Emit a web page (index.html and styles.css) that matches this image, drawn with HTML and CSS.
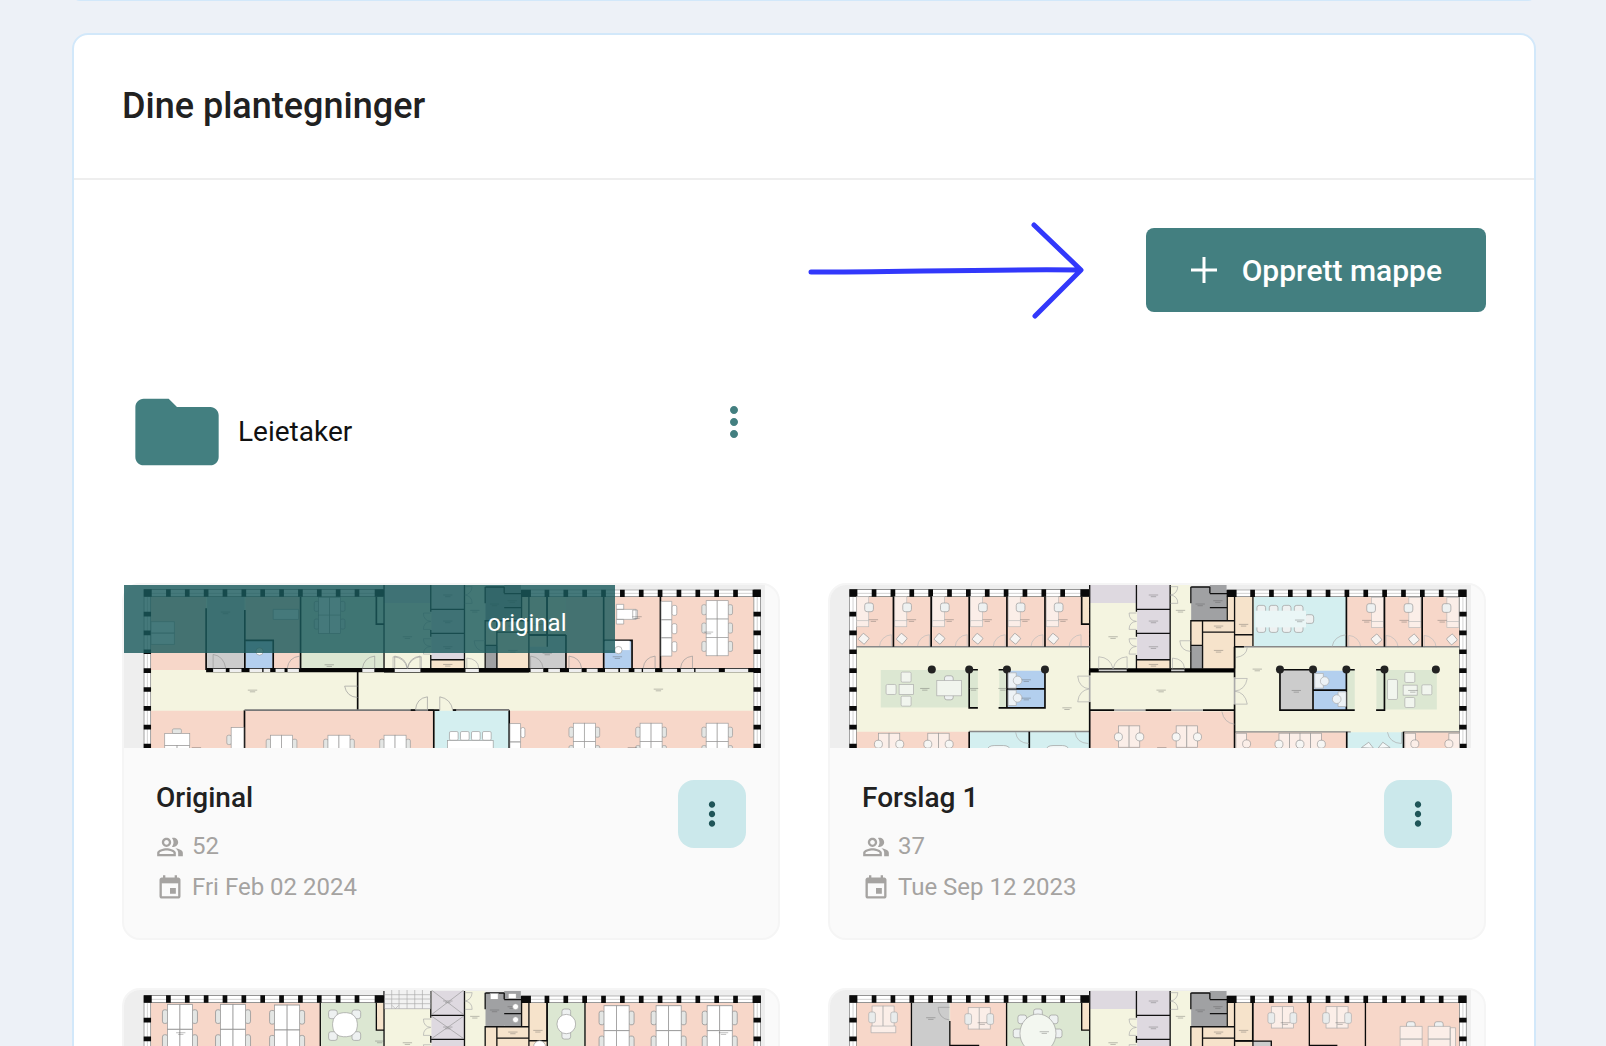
FILE: index.html
```html
<!DOCTYPE html>
<html lang="no">
<head>
<meta charset="utf-8">
<meta name="viewport" content="width=device-width, initial-scale=1">
<title>Dine plantegninger</title>
<link rel="stylesheet" href="styles.css">
</head>
<body>
<svg class="sprite" aria-hidden="true">
  <defs>
    <symbol id="more" viewBox="0 0 24 24"><path d="M12 8c1.1 0 2-.9 2-2s-.9-2-2-2-2 .9-2 2 .9 2 2 2zm0 2c-1.1 0-2 .9-2 2s.9 2 2 2 2-.9 2-2-.9-2-2-2zm0 6c-1.1 0-2 .9-2 2s.9 2 2 2 2-.9 2-2-.9-2-2-2z"/></symbol>
    <symbol id="people" viewBox="0 0 24 24"><path d="M16.5 13c-1.200 0-3.070.34-4.500 1-1.430-.67-3.300-1-4.500-1C5.330 13 1 14.080 1 16.250V19h22v-2.750c0-2.170-4.330-3.250-6.500-3.250z" fill="none"/><path d="M16.670 13.130C18.040 14.060 19 15.320 19 17v3h4v-3c0-2.180-3.570-3.470-6.330-3.870zM15 12c2.210 0 4-1.790 4-4s-1.790-4-4-4c-.47 0-.91.1-1.330.24C14.500 5.270 15 6.580 15 8s-.5 2.730-1.330 3.760c.42.140.86.240 1.330.24zM9 12c2.210 0 4-1.790 4-4s-1.790-4-4-4-4 1.790-4 4 1.790 4 4 4zm0-6c1.100 0 2 .9 2 2s-.9 2-2 2-2-.9-2-2 .9-2 2-2zM9 13c-2.670 0-8 1.340-8 4v3h16v-3c0-2.660-5.330-4-8-4zm6 5H3v-.99C3.200 16.290 6.300 15 9 15s5.800 1.290 6 2v1z"/></symbol>
    <symbol id="event" viewBox="0 0 24 24"><path opacity=".3" d="M5 5h14v3H5z"/><path d="M17 12h-5v5h5v-5zM16 1v2H8V1H6v2H5c-1.110 0-1.990.9-1.990 2L3 19c0 1.100.89 2 2 2h14c1.100 0 2-.9 2-2V5c0-1.100-.9-2-2-2h-1V1h-2zm3 18H5V8h14v11z"/></symbol>

    <!-- two-line room caption -->
    <g id="cap"><path d="M-14 0H14M-8 5H8" stroke="#555" stroke-width="2" opacity=".55"/></g>
    <!-- two desks back to back with a chair on each side -->
    <g id="desks" fill="#fff" stroke="#999" stroke-width="2">
      <rect x="-13" y="12" width="14" height="30" rx="5" fill="#e4e6e4"/><rect x="65" y="12" width="14" height="30" rx="5" fill="#e4e6e4"/>
      <rect width="33" height="55"/><rect x="33" width="33" height="55"/>
    </g>
    <g id="softdesks" stroke="#aaa" stroke-width="2">
      <rect width="33" height="64" fill="#fbeee8"/><rect x="33" width="33" height="64" fill="#fbeee8"/>
      <rect x="-10" y="18" width="20" height="32" rx="6" fill="#e9ecec"/><rect x="56" y="18" width="20" height="32" rx="6" fill="#e9ecec"/>
    </g>
    <g id="roundseats" stroke="#999" stroke-width="2">
      <rect width="32" height="64" fill="#fbeee8"/><rect x="32" width="32" height="64" fill="#fbeee8"/>
      <circle cx="0" cy="33" r="12" fill="#f6f6f4"/><circle cx="64" cy="33" r="12" fill="#f6f6f4"/>
    </g>
    <g id="door" fill="none" stroke="#aaa" stroke-width="2"><path d="M0 0V-38A38 38 0 0 1 38 0"/></g>
    <g id="seat"><rect x="-15" y="-15" width="30" height="30" rx="4" fill="#f1f5ee" stroke="#aaa" stroke-width="2"/></g>
    <g id="chair"><rect x="-13" y="-13" width="26" height="26" rx="7" fill="#eef1f1" stroke="#999" stroke-width="2"/></g>
    <!-- single office: desk, chair, armchair, door -->
    <g id="office">
      <rect width="36" height="75" fill="#fbeee8" stroke="#bbb" stroke-width="2"/><rect y="72" width="36" height="18" fill="#fbeee8" stroke="#bbb" stroke-width="2"/>
      <use href="#chair" x="37" y="32"/>
      <rect x="9" y="114" width="24" height="24" rx="3" fill="#f6f4f2" stroke="#999" stroke-width="2" transform="rotate(40 21 126)"/>
      <path d="M68 150A38 38 0 0 1 104 114V150" fill="none" stroke="#bbb" stroke-width="2"/>
      <use href="#cap" x="50" y="69"/>
    </g>
    <!-- outer wall with windows -->
    <g id="shell">
      <path d="M100 69H808M1220 70H1936M99 58V560M1926 58V560" stroke="#777" stroke-width="22"/>
      <path d="M110 69H800M1228 70H1916M99 80V560M1926 80V560" stroke="#fff" stroke-width="18"/>
      <path d="M110 70H800M1228 70H1916M99 80V560M1926 80V560" stroke="#bbb" stroke-width="2"/>
      <path d="M155 69H770M1289 70H1900" stroke="#0a0a0a" stroke-width="22" stroke-dasharray="14 42.500"/>
      <path d="M99 125V560M1926 125V560" stroke="#0a0a0a" stroke-width="22" stroke-dasharray="14 42.500"/>
      <path d="M88 58h24v22h-24zM780 58h28v22h-28zM1218 59h30v22h-30zM1912 59h25v22h-25z" fill="#0a0a0a"/>
    </g>
    <!-- stair and lift core -->
    <g id="core">
      <path d="M808 45h302v250H808z" fill="#f4f4e0"/>
      <path d="M808 45h140v54H808zM950 45h98v223h-98z" fill="#ded9e0"/>
      <path d="M950 270h98v26h-98zM1112 152h36v74h-36zM1148 152h94v144h-94zM1220 80h78v150h-78z" fill="#f6e3cb"/>
      <path d="M1112 50h56v100h-56zM1168 45h50v105h-50zM1112 228h36v68h-36z" fill="#a0a1a3"/>
      <path d="M808 45V300M948 45V125M948 180V200M948 255V298M1049 45V295M1111 50V100M1111 150V300M1220 80V150M1242 80V295M1297 80V230M1146 152V295M1168 50V70M1112 51H1168M1168 71H1220M1168 113H1220M948 118H1050M948 190H1050M948 269H1050M1111 152H1244M1146 186H1244M1112 226H1146M1242 194H1298" fill="none" stroke="#111" stroke-width="4"/>
      <path d="M808 301H1242" stroke="#000" stroke-width="13"/>
      <path d="M835 301h84M1052 301h40" stroke="#ccc" stroke-width="5"/>
      <path d="M948 129H926M948 178H926M926 129Q926 152 948 154Q926 156 926 178M948 206H926M948 252H926M926 206Q926 228 948 229Q926 231 926 252M835 296V260Q870 262 878 296Q886 262 920 260V296M1050 50H1072M1050 100H1072M1072 50Q1070 72 1050 75Q1072 78 1072 100M1110 212H1078Q1080 242 1110 244M1056 295V264Q1090 266 1092 295" fill="none" stroke="#aaa" stroke-width="2"/>
      <use href="#cap" x="878" y="200"/><use href="#cap" x="999" y="75"/><use href="#cap" x="999" y="153"/><use href="#cap" x="999" y="230"/><use href="#cap" x="1080" y="121"/><use href="#cap" x="1194" y="241"/><use href="#cap" x="1194" y="168"/><use href="#cap" x="1269" y="163"/><use href="#cap" x="1139" y="102"/><use href="#cap" x="1192" y="92"/><use href="#cap" x="999" y="283"/>
    </g>
  </defs>
</svg>

<main class="page">
  <section class="panel panel-previous" aria-hidden="true"></section>
  <section class="panel">
    <header class="panel-head"><h1>Dine plantegninger</h1></header>
    <div class="panel-body">
      <div class="toolbar">
        <svg class="arrow" width="276" height="98" viewBox="0 0 276 98" aria-hidden="true"><path d="M3 51C90 51 180 48 272 49M226 4L273 49L227 95" fill="none" stroke="#3238fb" stroke-width="5" stroke-linecap="round" stroke-linejoin="round"/></svg>
        <button class="create" type="button"><svg width="28" height="28" viewBox="0 0 28 28" aria-hidden="true"><path d="M14 1V27M1 14H27" stroke="#fff" stroke-width="3"/></svg>Opprett mappe</button>
      </div>

      <div class="grid folders">
        <div class="folder">
          <svg class="folder-icon" viewBox="0 0 24 24" aria-hidden="true"><path d="M10 4H4c-1.100 0-1.990.9-1.990 2L2 18c0 1.100.9 2 2 2h16c1.100 0 2-.9 2-2V8c0-1.100-.9-2-2-2h-8l-2-2z"/></svg>
          <a class="folder-name" href="#leietaker">Leietaker</a>
          <button class="folder-menu" type="button" aria-label="Mappevalg"><svg width="48" height="48"><use href="#more"/></svg></button>
        </div>
      </div>

      <div class="grid">
        <article class="card">
          <div class="thumb">
            <svg class="plan" viewBox="39 45 1920 489" preserveAspectRatio="xMinYMin slice" aria-hidden="true">
              <path d="M39 45h1920v489H39z" fill="#eee"/>
              <path d="M119 78h1806v460H119z" fill="#f4f4e0"/>
              <path d="M119 80h166v220H119zM403 80h165v215H403zM1362 80h563v215h-563zM119 422h848v116H119zM1195 422h730v116h-730z" fill="#f7d7c9"/>
              <path d="M288 80h112v215H288zM1254 195h108v100h-108z" fill="#ccc"/>
              <path d="M570 80h248v215H570z" fill="#dce7d2"/>
              <path d="M403 212h81v83h-81zM1478 212h82v83h-82z" fill="#b3cfee"/>
              <path d="M970 422h223v116H970z" fill="#d4eff0"/>
              <path d="M1306 80h56v115h-56z" fill="#f6e3cb"/>
              <use href="#core" x="10"/>
              <use href="#shell" x="10"/>
              <path d="M285 300H1945" stroke="#050505" stroke-width="13"/>
              <path d="M306 301h38M355 301h36M415 301h38M457 301h20M493 301h27M529 301h34M753 301h36M850 301h77M1062 301h40M1257 301h38M1310 301h35M1372 301h38M1425 301h33M1480 301h40M1525 301h26M1568 301h22M1594 301h36M1652 301h44M1707 301h40M1751 301h70M1839 301h70" stroke="#eee" stroke-width="10"/>
              <path d="M285 115V300M401 120V300M568 80V300M739 305V420M400 420V540M967 420V540M1193 420V540M401 211H486V295M795 80V162H818M1363 195V295M1254 195H1363M1476 80V295M1476 211H1561V295M1646 80V295M1306 80V195" fill="none" stroke="#0a0a0a" stroke-width="5"/>
              <path d="M400 420H967M1025 419H1193" stroke="#777" stroke-width="5"/><path d="M898 420h14M950 420h34M1024 420h10" stroke="#111" stroke-width="5"/>
              <path d="M739 348H700Q706 380 739 382M912 420Q915 384 948 380V420M985 420V380Q1018 386 1024 420M790 295V258Q758 262 753 295M850 295V258Q884 262 888 295Q894 262 926 258V295M565 295V258Q532 262 528 295M306 295V253Q338 258 344 295M1372 295V258Q1406 262 1410 295M1630 295V258Q1598 262 1594 295M1742 295V258Q1710 262 1706 295M1257 295V258Q1290 262 1295 295" fill="none" stroke="#999" stroke-width="2"/>
              <g fill="#fff" stroke="#999" stroke-width="2">
                <rect x="184" y="476" width="27" height="14" rx="4" fill="#e4e6e4"/><rect x="161" y="490" width="75" height="36"/><rect x="161" y="526" width="37" height="20"/><rect x="198" y="526" width="37" height="20"/>
                <rect x="347" y="495" width="14" height="28" rx="5" fill="#e4e6e4"/><rect x="360" y="472" width="38" height="70"/>
                <path d="M120 155h70v34h-70zM120 189h70v34h-70zM486 118h76v30h-76z"/>
                <path d="M1648 94h32v55h-32zM1648 149h32v54h-32zM1648 203h32v55h-32zM1195 460h32v55h-32zM1195 515h32v30h-32z"/>
                <path d="M1515 118h58v30h-58zM1514 103h22v15h-22zM1514 148h22v14h-22zM1563 120h14v26h-14z"/>
                <rect x="1480" y="212" width="74" height="28" stroke="none"/><circle cx="1520" cy="240" r="11"/><circle cx="445" cy="244" r="11"/>
                <rect x="1014" y="484" width="26" height="26" rx="4"/><rect x="1047" y="484" width="26" height="26" rx="4"/><rect x="1080" y="484" width="26" height="26" rx="4"/><rect x="1113" y="484" width="26" height="26" rx="4"/><rect x="1008" y="511" width="137" height="40"/>
                <rect x="1681" y="106" width="14" height="30" rx="5"/><rect x="1681" y="161" width="14" height="30" rx="5"/><rect x="1681" y="215" width="14" height="30" rx="5"/><rect x="1228" y="472" width="12" height="30" rx="5"/>
              </g>
              <use href="#desks" x="478" y="495"/><use href="#desks" x="650" y="495"/><use href="#desks" x="818" y="495"/>
              <use href="#desks" x="1385" y="459"/><use href="#desks" x="1385" y="514"/><use href="#desks" x="1585" y="459"/><use href="#desks" x="1585" y="514"/><use href="#desks" x="1783" y="459"/><use href="#desks" x="1783" y="514"/>
              <use href="#desks" x="1783" y="92"/><use href="#desks" x="1783" y="147"/><use href="#desks" x="1783" y="202"/><use href="#desks" x="622" y="82"/><use href="#desks" x="622" y="135"/>
              <use href="#cap" x="424" y="360"/><use href="#cap" x="1640" y="357"/><use href="#cap" x="1790" y="186"/><use href="#cap" x="654" y="284"/><use href="#cap" x="1576" y="140"/><use href="#cap" x="256" y="532"/><use href="#cap" x="1562" y="532"/><use href="#cap" x="1307" y="249"/><use href="#cap" x="1517" y="260"/><use href="#cap" x="343" y="126"/>
            </svg>
            <span class="ribbon">original</span>
          </div>
          <div class="card-body">
            <div class="card-info">
              <h2>Original</h2>
              <p class="meta"><svg width="28" height="28" aria-hidden="true"><use href="#people"/></svg>52</p>
              <p class="meta"><svg width="28" height="28" aria-hidden="true"><use href="#event"/></svg>Fri Feb 02 2024</p>
            </div>
            <button class="card-menu" type="button" aria-label="Valg for Original"><svg width="38" height="38"><use href="#more"/></svg></button>
          </div>
        </article>

        <article class="card">
          <div class="thumb">
            <svg class="plan" viewBox="30 45 1920 489" preserveAspectRatio="xMinYMin slice" aria-hidden="true">
              <path d="M30 45h1920v489H30z" fill="#eee"/>
              <path d="M109 78h1806v460H109z" fill="#f4f4e0"/>
              <path d="M109 80h699v150H109zM1579 80h336v150h-336zM109 485h338v55H109zM808 424h434v116H808zM1244 486h333v54h-333zM1750 486h165v54h-165z" fill="#f7d7c9"/>
              <path d="M182 300h265v112H182zM449 300h24v112h-24zM537 300h23v112h-23zM1580 300h22v118h-22zM1667 300h23v118h-23zM1692 300h156v118h-156z" fill="#dce7d2"/>
              <path d="M562 302h112v110H562zM1480 302h97v118h-97z" fill="#b3cfee"/>
              <path d="M449 485h177v55H449zM629 485h177v55H629zM1300 80h277v150h-277zM1579 486h169v54h-169z" fill="#d4eff0"/>
              <path d="M1378 300h99v120h-99z" fill="#ccc"/>
              <path d="M784 80h22v82h-22z" fill="#f6e3cb"/>
              <use href="#core"/>
              <use href="#shell"/>
              <use href="#office" x="110" y="80"/><use href="#office" x="224" y="80"/><use href="#office" x="337" y="80"/><use href="#office" x="451" y="80"/><use href="#office" x="564" y="80"/><use href="#office" x="678" y="80"/>
              <use href="#office" transform="matrix(-1 0 0 1 1688 82)"/><use href="#office" transform="matrix(-1 0 0 1 1800 82)"/><use href="#office" transform="matrix(-1 0 0 1 1914 82)"/>
              <path d="M109 230H808M1244 230H1915M808 484H447M1244 485H1590M1748 485H1915" stroke="#888" stroke-width="4"/>
              <path d="M220 80V230M333 80V230M447 80V230M560 80V230M674 80V230M784 80V162H806M1577 80V230M1691 80V230M1804 80V230M808 300V316M808 395V540M1242 230V322M1242 402V540M447 485V540M627 485V540M1578 485V540M1748 485V540M808 420H882M975 420H1053M1147 420H1242M1242 230H1270" fill="none" stroke="#0a0a0a" stroke-width="5"/>
              <path d="M882 420h92M1053 420h94M808 318v76M1242 322v80" stroke="#aaa" stroke-width="5"/>
              <path d="M473 299H447V413H473M535 299H560V413M535 413H560M674 298V413H560M560 356H674M1378 298V420H1602M1378 299H1477V420M1477 360H1577M1577 299V420M1577 299H1602M1666 299H1691V420H1666" fill="none" stroke="#0a0a0a" stroke-width="5"/>
              <g fill="#222"><circle cx="335" cy="298" r="12"/><circle cx="447" cy="298" r="12"/><circle cx="560" cy="298" r="12"/><circle cx="674" cy="298" r="12"/><circle cx="1378" cy="298" r="12"/><circle cx="1477" cy="298" r="12"/><circle cx="1577" cy="298" r="12"/><circle cx="1691" cy="298" r="12"/><circle cx="1845" cy="298" r="12"/></g>
              <use href="#seat" x="258" y="321"/><use href="#seat" x="213" y="358"/><use href="#seat" x="258" y="393"/><use href="#seat" x="1767" y="322"/><use href="#seat" x="1818" y="359"/><use href="#seat" x="1767" y="397"/>
              <g fill="#f1f5ee" stroke="#aaa" stroke-width="2"><rect x="237" y="343" width="43" height="30"/><use href="#chair" x="386" y="330"/><use href="#chair" x="386" y="376"/><rect x="350" y="331" width="74" height="46"/><rect x="1747" y="345" width="42" height="30"/><rect x="1700" y="328" width="30" height="60" rx="4"/></g>
              <g fill="#edf2f6" stroke="#aaa" stroke-width="2"><path d="M564 308h24v46h-24zM564 360h24v46h-24zM1482 310h26v44h-26zM1552 365h24v44h-24z"/><circle cx="592" cy="331" r="13"/><circle cx="592" cy="383" r="13"/><circle cx="1512" cy="333" r="13"/><circle cx="1548" cy="387" r="13"/></g>
              <g><use href="#chair" x="1322" y="119"/><use href="#chair" x="1359" y="119"/><use href="#chair" x="1398" y="119"/><use href="#chair" x="1434" y="119"/><use href="#chair" x="1322" y="174"/><use href="#chair" x="1359" y="174"/><use href="#chair" x="1398" y="174"/><use href="#chair" x="1434" y="174"/><use href="#chair" x="1466" y="147"/><rect x="1304" y="122" width="152" height="50" fill="#eaf6f6"/></g>
              <path d="M808 318H772Q776 354 808 356Q776 360 772 395H808M1242 325H1280Q1274 360 1242 363Q1274 366 1280 402H1242M1534 230Q1540 198 1576 194M586 486Q590 518 626 520M764 486Q768 518 804 520M1700 486Q1706 518 1742 520V486M1204 424Q1210 458 1242 462M1246 262Q1278 258 1280 232" fill="none" stroke="#aaa" stroke-width="2"/>
              <use href="#roundseats" x="894" y="467"/><use href="#roundseats" x="1067" y="467"/><use href="#roundseats" x="175" y="489"/><use href="#roundseats" x="323" y="489"/><use href="#roundseats" x="1375" y="489"/><use href="#roundseats" x="1438" y="489"/>
              <g stroke="#999" stroke-width="2" fill="#fbeee8"><rect x="1246" y="489" width="32" height="60"/><circle cx="1278" cy="521" r="12"/><rect x="1752" y="489" width="32" height="60"/><circle cx="1782" cy="521" r="12"/><rect x="1884" y="489" width="32" height="60"/><circle cx="1884" cy="521" r="12"/></g>
              <g fill="#f4f8f8" stroke="#999" stroke-width="2"><path d="M500 540Q504 526 522 526H550Q566 526 572 540ZM676 540Q680 526 698 526H726Q742 526 748 540ZM1622 532l22-16 14 18zM1708 532l-22-16-14 18z"/></g>
              <use href="#cap" x="314" y="355"/><use href="#cap" x="740" y="413"/><use href="#cap" x="1022" y="360"/><use href="#cap" x="1310" y="297"/><use href="#cap" x="1437" y="150"/><use href="#cap" x="1427" y="361"/><use href="#cap" x="618" y="329"/><use href="#cap" x="618" y="384"/><use href="#cap" x="1776" y="361"/><use href="#cap" x="1024" y="532"/><use href="#cap" x="460" y="355"/><use href="#cap" x="548" y="355"/>
            </svg>
          </div>
          <div class="card-body">
            <div class="card-info">
              <h2>Forslag 1</h2>
              <p class="meta"><svg width="28" height="28" aria-hidden="true"><use href="#people"/></svg>37</p>
              <p class="meta"><svg width="28" height="28" aria-hidden="true"><use href="#event"/></svg>Tue Sep 12 2023</p>
            </div>
            <button class="card-menu" type="button" aria-label="Valg for Forslag 1"><svg width="38" height="38"><use href="#more"/></svg></button>
          </div>
        </article>

        <article class="card">
          <div class="thumb">
            <svg class="plan" viewBox="39 42 1920 489" preserveAspectRatio="xMinYMin slice" aria-hidden="true">
              <path d="M39 40h1920v500H39z" fill="#eee"/>
              <path d="M119 80h1806v460H119z" fill="#f4f4e0"/>
              <path d="M119 81h508v220H119zM1422 81h503v220h-503z" fill="#f7d7c9"/>
              <path d="M630 81h188v220H630zM1308 81h112v220h-112z" fill="#dce7d2"/>
              <path d="M795 81h22v82h-22z" fill="#f6e3cb"/>
              <use href="#core" x="10"/>
              <use href="#shell" x="10"/>
              <path d="M820 42h137v56H820z" fill="#f2f2f2"/>
              <path d="M820 56h137M820 69h137M820 83h137M820 98h137M841 42v56M863 42v56M887 42v56M910 42v56M933 42v56M842 88l10 10 10-10" fill="none" stroke="#aaa" stroke-width="2"/>
              <path d="M960 42L1057 116M1057 42L960 116M960 120L1057 188M1057 120L960 188" stroke="#999" stroke-width="2"/>
              <path d="M627 80V300M1306 80V195M1420 80V300M795 80V162H818" fill="none" stroke="#0a0a0a" stroke-width="4"/>
              <g transform="translate(169 85) scale(1.140 1.360)"><use href="#desks"/><use href="#desks" y="55"/></g>
              <g transform="translate(328 85) scale(1.140 1.360)"><use href="#desks"/><use href="#desks" y="55"/></g>
              <g transform="translate(490 87) scale(1.140 1.360)"><use href="#desks"/><use href="#desks" y="55"/></g>
              <g transform="translate(1477 89) scale(1.140 1.360)"><use href="#desks"/><use href="#desks" y="55"/></g>
              <g transform="translate(1633 89) scale(1.140 1.360)"><use href="#desks"/><use href="#desks" y="55"/></g>
              <g transform="translate(1786 89) scale(1.140 1.360)"><use href="#desks"/><use href="#desks" y="55"/></g>
              <use href="#chair" x="665" y="115"/><use href="#chair" x="735" y="115"/><use href="#chair" x="665" y="180"/><use href="#chair" x="735" y="180"/><use href="#chair" x="1364" y="112"/><use href="#chair" x="1364" y="176"/>
              <g fill="#fff" stroke="#999" stroke-width="2"><rect x="664" y="110" width="74" height="72" rx="32"/><ellipse cx="1364" cy="144" rx="28" ry="29"/><circle cx="1284" cy="212" r="18"/><rect x="1136" y="52" width="24" height="18"/><rect x="1190" y="52" width="24" height="16"/><circle cx="1212" cy="92" r="9"/><circle cx="1212" cy="131" r="9"/></g>
              <use href="#cap" x="209" y="170"/><use href="#cap" x="1835" y="170"/><use href="#cap" x="805" y="195"/>
            </svg>
          </div>
        </article>

        <article class="card">
          <div class="thumb">
            <svg class="plan" viewBox="30 42 1920 489" preserveAspectRatio="xMinYMin slice" aria-hidden="true">
              <path d="M30 40h1920v500H30z" fill="#eee"/>
              <path d="M109 80h1806v460H109z" fill="#f4f4e0"/>
              <path d="M109 81h164v220H109zM390 81h168v220H390zM1298 81h617v220h-617z" fill="#f7d7c9"/>
              <path d="M276 81h112v220H276zM1244 195h108v105h-108z" fill="#ccc"/>
              <path d="M560 81h247v220H560z" fill="#dce7d2"/>
              <path d="M784 81h22v82h-22z" fill="#f6e3cb"/>
              <use href="#core"/>
              <use href="#shell"/>
              <path d="M274 80V300M389 135V300M559 80V300M1296 80V195M1244 195H1352V300M1466 80V300M1634 80V300M784 80V162H806M389 208H477M1466 208H1550" fill="none" stroke="#0a0a0a" stroke-width="4"/>
              <path d="M388 94H354Q356 128 388 132" fill="none" stroke="#999" stroke-width="2"/>
              <g><use href="#softdesks" x="156" y="90"/><path d="M153 150h74v20h-74z" fill="#fbeee8" stroke="#aaa" stroke-width="2"/><use href="#softdesks" x="444" y="95"/><use href="#softdesks" x="1352" y="92"/><use href="#softdesks" x="1516" y="92"/></g>
              <use href="#chair" x="653" y="112"/><use href="#chair" x="606" y="130"/><use href="#chair" x="700" y="130"/><use href="#chair" x="592" y="172"/><use href="#chair" x="712" y="172"/><use href="#chair" x="1770" y="150"/><use href="#chair" x="1854" y="150"/>
              <ellipse cx="653" cy="172" rx="54" ry="58" fill="#f3f7f0" stroke="#999" stroke-width="2"/>
              <path d="M1738 151h66v38h-66zM1738 189h66v38h-66zM1822 151h66v38h-66zM1822 189h66v38h-66zM1888 155h16v60h-16z" fill="#fbeee8" stroke="#aaa" stroke-width="2"/>
              <use href="#cap" x="332" y="125"/><use href="#cap" x="486" y="140"/><use href="#cap" x="672" y="167"/><use href="#cap" x="1394" y="140"/><use href="#cap" x="1558" y="140"/>
            </svg>
          </div>
        </article>
      </div>
    </div>
  </section>
</main>
</body>
</html>
```
FILE: styles.css
```css
* { box-sizing: border-box; }

body {
  margin: 0;
  background: #edf1f7;
  color: #212121;
  font-family: Roboto, "Liberation Sans", sans-serif;
}

h1, h2, p { margin: 0; }
button { font: inherit; border: 0; cursor: pointer; }
svg { display: block; flex: none; }

.sprite { position: absolute; width: 0; height: 0; }

.page {
  height: 100vh;
  overflow: hidden;
  padding: 0 70px 0 72px;
}

.panel {
  background: #fff;
  border: 2px solid #d2e8fa;
  border-radius: 16px;
}

.panel-previous {
  height: 16px;
  margin: -15px 0 32px;
}

.panel-head {
  padding: 48px;
  border-bottom: 2px solid #eee;
}

.panel-head h1 {
  font-size: 36px;
  font-weight: 500;
  line-height: 47px;
}

.panel-body { padding: 48px; }

.toolbar {
  display: flex;
  justify-content: flex-end;
  align-items: center;
  gap: 62px;
  height: 84px;
}

.create {
  display: flex;
  align-items: center;
  gap: 24px;
  height: 84px;
  padding: 0 44px;
  border-radius: 8px;
  background: #437f80;
  color: #fff;
  font-size: 30px;
  font-weight: 500;
}

.grid {
  display: grid;
  grid-template-columns: 1fr 1fr;
  gap: 48px;
}

.folders { margin: 70px 0 101px; }

.folder {
  display: flex;
  align-items: center;
  padding: 0 22px 0 5px;
}

.folder-icon {
  width: 100px;
  height: 100px;
  fill: #437f80;
}

.folder-name {
  flex: 1;
  margin-left: 11px;
  color: #111;
  font-size: 28px;
  line-height: 32px;
  text-decoration: none;
}

.folder-menu {
  margin-bottom: 20px;
  padding: 0;
  background: none;
  fill: #437f80;
}

.card {
  border: 2px solid #f5f5f5;
  border-radius: 18px;
  background: #fafafa;
}

.thumb { position: relative; }

.plan {
  width: 98%;
  height: 163px;
  border-top-left-radius: 16px;
}

.ribbon {
  position: absolute;
  top: 0;
  left: 0;
  width: 75%;
  height: 68px;
  padding: 24px 48px 0 0;
  background: rgba(26, 90, 92, 0.81);
  color: #fff;
  font-size: 24px;
  line-height: 28px;
  text-align: right;
}

.card-body {
  display: flex;
  justify-content: space-between;
  align-items: flex-start;
  height: 190px;
  padding: 32px;
}

.card-info h2 {
  margin-bottom: 10px;
  font-size: 28px;
  font-weight: 500;
  line-height: 36px;
}

.meta {
  display: flex;
  align-items: center;
  gap: 8px;
  color: #a5a3a1;
  fill: #a5a3a1;
  font-size: 24px;
  line-height: 41px;
}

.card-menu {
  display: flex;
  align-items: center;
  justify-content: center;
  width: 68px;
  height: 68px;
  padding: 0;
  border-radius: 16px;
  background: #cbe8eb;
  fill: #1f5558;
}
```
